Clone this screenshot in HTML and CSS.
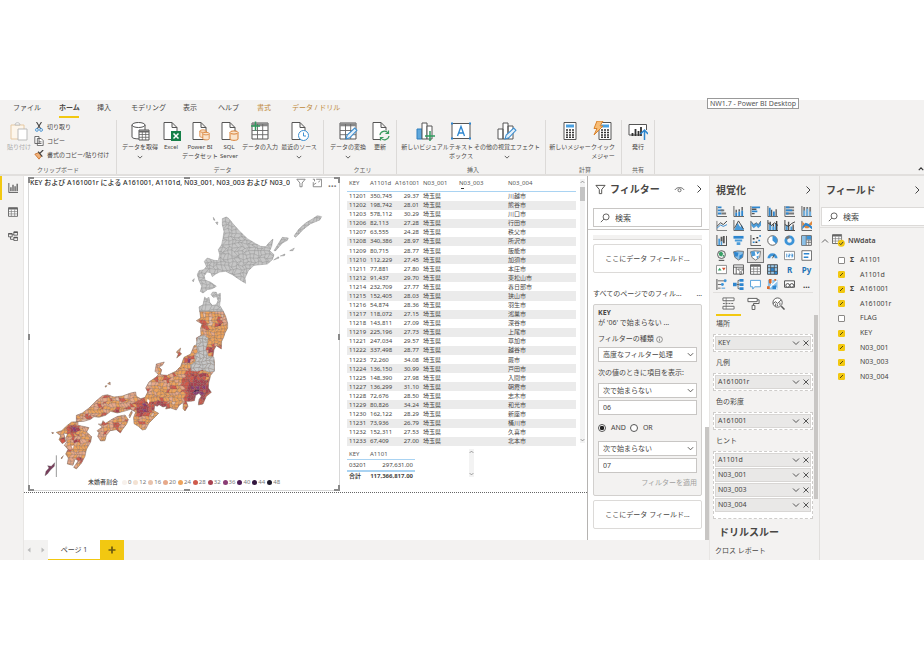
FILE: index.html
```html
<!DOCTYPE html>
<html lang="ja">
<head>
<meta charset="utf-8">
<title>NW1.7 - Power BI Desktop</title>
<link rel="stylesheet" href="styles.css">
</head>
<body>
<svg class="defs" aria-hidden="true">
  <defs>
    <symbol id="chev-down" viewBox="0 0 8 8"><path d="M1 2.5 4 5.5 7 2.5" fill="none" stroke="currentColor"/></symbol>
    <symbol id="chev-right" viewBox="0 0 8 8"><path d="M2.5 .5 6 4 2.5 7.5" fill="none" stroke="currentColor"/></symbol>
    <symbol id="cross" viewBox="0 0 8 8"><path d="M1.5 1.5 6.5 6.5M6.5 1.5 1.5 6.5" fill="none" stroke="currentColor"/></symbol>
    <symbol id="lens" viewBox="0 0 12 12"><circle cx="7.3" cy="4.7" r="3.6" fill="none" stroke="currentColor"/><path d="M4.6 7.4 1 11" stroke="currentColor"/></symbol>
    <symbol id="funnel" viewBox="0 0 12 12"><path d="M1 1.5H11L7.3 6V10.5H4.7V6Z" fill="none" stroke="currentColor"/></symbol>
    <symbol id="page" viewBox="0 0 20 20"><path d="M3 1.5H11L16 6.5V18.5H3ZM11 1.5V6.5H16" fill="#fff" stroke="#555"/></symbol>
    <symbol id="cyl" viewBox="0 0 10 11"><path d="M1 2.5V9C1 10.8 9 10.8 9 9V2.5" fill="#f9e4cd" stroke="#d98035"/><ellipse cx="5" cy="2.5" rx="4" ry="1.6" fill="#f9e4cd" stroke="#d98035"/></symbol>
    <symbol id="gridicon" viewBox="0 0 20 20"><path d="M2 2H18V18H2Z" fill="#fff" stroke="#555"/><path d="M2 3.8H18" stroke="#888" stroke-width="3"/><path d="M7.5 3V18M12.7 3V18M2 9.5H18M2 13.7H18" stroke="#666" stroke-width=".9"/></symbol>
    <symbol id="pencil" viewBox="0 0 12 12"><path d="M1 11 2 7.5 9 1 11 3 4.4 10Z" fill="#e4f1fb" stroke="#3d8fd1"/></symbol>
    <symbol id="calc" viewBox="0 0 20 20"><path d="M4 1.5H16V18.5H4Z" fill="#fff" stroke="#555"/><path d="M6 3.5H14V6.5H6Z" fill="#4aa0e0"/><path d="M6 9H8M9 9H11M12 9H14M6 11.5H8M9 11.5H11M12 11.5H14M6 14H8M9 14H11M12 14H14M6 16.3H8M9 16.3H11M12 16.3H14" stroke="#333" stroke-width="1.5"/></symbol>
    <symbol id="bars3" viewBox="0 0 20 20"><path d="M2 8H7V18H2Z" fill="#5fa8dc" stroke="#2e7ebd"/><path d="M7 2H12V18H7Z" fill="#fff" stroke="#555"/><path d="M12 5H17V18H12Z" fill="#fff" stroke="#555"/></symbol>

    <symbol id="v-barh" viewBox="0 0 12 12"><path d="M1 0V11.5H12" fill="none" stroke="#555"/><path d="M2 1.5H6M2 4.8H8M2 8.2H6" stroke="#2e86cf" stroke-width="2"/><path d="M5 4.8H9M6 8.2H11" stroke="#777" stroke-width="2"/></symbol>
    <symbol id="v-colstack" viewBox="0 0 12 12"><path d="M1 0V11.5H12" fill="none" stroke="#555"/><path d="M3.5 7V11M6.8 6V11M10 5V11" stroke="#2e86cf" stroke-width="2"/><path d="M3.5 4V7M6.8 3.5V6M10 1V5" stroke="#555" stroke-width="1.5"/></symbol>
    <symbol id="v-barc" viewBox="0 0 12 12"><path d="M1 0V11.5H12" fill="none" stroke="#555"/><path d="M2 1.5H11M2 5.8H8" stroke="#2e86cf" stroke-width="2"/><path d="M2 3.6H7M2 8.3H5" stroke="#555" stroke-width="1.5"/></symbol>
    <symbol id="v-colc" viewBox="0 0 12 12"><path d="M1 0V11.5H12" fill="none" stroke="#555"/><path d="M3 2V11M7.5 6V11" stroke="#2e86cf" stroke-width="2"/><path d="M5 4V11M10 3.5V11" stroke="#555" stroke-width="1.4"/></symbol>
    <symbol id="v-bar100" viewBox="0 0 12 12"><path d="M1 0V11.5H12" fill="none" stroke="#555"/><path d="M2 1.5H11M2 4.8H11M2 8.2H11" stroke="#777" stroke-width="2"/><path d="M2 1.5H6M2 4.8H9M2 8.2H5" stroke="#2e86cf" stroke-width="2"/></symbol>
    <symbol id="v-col100" viewBox="0 0 12 12"><path d="M1 0V11.5H12" fill="none" stroke="#555"/><path d="M3.5 1V11M6.8 1V11M10 1V11" stroke="#777" stroke-width="2"/><path d="M3.5 5V11M6.8 3V11M10 6V11" stroke="#6fb1e2" stroke-width="2"/></symbol>
    <symbol id="v-line" viewBox="0 0 12 12"><path d="M1 1V11.5H12" fill="none" stroke="#777"/><path d="M1 7 5 3 8 5 12 1" fill="none" stroke="#333"/><path d="M1 9 5 5.5 8 7 12 5" fill="none" stroke="#2e86cf"/></symbol>
    <symbol id="v-area" viewBox="0 0 12 12"><path d="M1 0V11.5H12" fill="none" stroke="#555"/><path d="M1.5 11 5 3 8 8 9.5 5 12 11Z" fill="#4a9bd9"/><path d="M1.5 9 6 1 11.5 10" fill="none" stroke="#444"/></symbol>
    <symbol id="v-ribbonarea" viewBox="0 0 12 12"><path d="M1 1V11.5H12" fill="none" stroke="#555"/><path d="M1.500 2 4 5 7 3 9 5 12 1V6L9 9 7 6.500 4 9 1.500 6Z" fill="#4a9bd9"/><path d="M1.5 2 4 5 7 3 9 5 12 1" fill="none" stroke="#444" stroke-width=".7"/></symbol>
    <symbol id="v-combo" viewBox="0 0 12 12"><path d="M1 0V11.5H12" fill="none" stroke="#333"/><path d="M3.5 5V11M7 7V11M10 4V11" stroke="#4a9bd9" stroke-width="2.4"/><path d="M3.500 2V5M7 4.500V7M10.500 1V11" stroke="#444" stroke-width="1.5"/><path d="M1 3 5 6 8 3 12 6" fill="none" stroke="#333"/></symbol>
    <symbol id="v-combo2" viewBox="0 0 12 12"><path d="M1 0V11.5H12" fill="none" stroke="#333"/><path d="M3 6V11M8 7V11" stroke="#4a9bd9" stroke-width="2"/><path d="M5 2V11M10 5V11" stroke="#555" stroke-width="1.500"/><path d="M1 5 5 7 8 4 12 2" fill="none" stroke="#333"/></symbol>
    <symbol id="v-flow" viewBox="0 0 12 12"><path d="M1 1V11.5H12" fill="none" stroke="#555"/><path d="M1.500 2 5 5 8 5 12 1V5L8 9 5 9 1.500 6Z" fill="#e0873b"/><path d="M1.5 7 5 3 8 4 12 7V10L8 7 5 6 1.5 10Z" fill="#2e86cf"/></symbol>
    <symbol id="v-water" viewBox="0 0 12 12"><path d="M1 0V11.5H12M11.500 1V11" fill="none" stroke="#444"/><path d="M3.500 4V11" stroke="#4a9bd9" stroke-width="2"/><path d="M6 2V7M8.5 1V9" stroke="#555" stroke-width="2"/><path d="M6 7V11" stroke="#4a9bd9" stroke-width="1.5"/></symbol>
    <symbol id="v-funnel" viewBox="0 0 12 12"><path d="M.5 1H11.5V4H.5Z" fill="#2e86cf"/><path d="M2 5H10V7H2ZM4 8H8V11H4Z" fill="#4a9bd9"/></symbol>
    <symbol id="v-scatter" viewBox="0 0 12 12"><path d="M1 0V11.5H12" fill="none" stroke="#555"/><path d="M3 4H5M7 3H9M6 8H8" stroke="#333" stroke-width="1.7"/><path d="M9 6H11M3 8H5M10 1H12" stroke="#2e86cf" stroke-width="1.7"/></symbol>
    <symbol id="v-pie" viewBox="0 0 12 12"><circle cx="6" cy="6" r="5.2" fill="#fff" stroke="#555"/><path d="M6 6V.8A5.200 5.200 0 0 1 10 9.500Z" fill="#3d94d8"/></symbol>
    <symbol id="v-donut" viewBox="0 0 12 12"><circle cx="6" cy="6" r="4" fill="none" stroke="#3d94d8" stroke-width="3"/><path d="M6 2A4 4 0 0 0 2.500 4" fill="none" stroke="#777" stroke-width="3"/></symbol>
    <symbol id="v-tree" viewBox="0 0 12 12"><path d="M.7.7H11.3V11.3H.7Z" fill="#fff" stroke="#555"/><path d="M1 1H5.500V11H1Z" fill="#8cc1e8"/><path d="M6 1H11V5H6Z" fill="#3d94d8"/><path d="M5.700 1V11M6 5.500H11M8.500 5.500V11M6 8H11" stroke="#555" stroke-width=".8"/></symbol>
    <symbol id="v-globe" viewBox="0 0 12 12"><circle cx="6" cy="5" r="4.300" fill="#eee" stroke="#555"/><path d="M3 3 6 1.500 8 4 6 7 3.500 6ZM7 6 9.500 5 8 8Z" fill="#39a066"/><path d="M3 11.300H9" stroke="#333"/></symbol>
    <symbol id="v-fill" viewBox="0 0 12 12"><path d="M.6 2 5 1 11.500 1.500 10.500 8 6 11 2 8Z" fill="#8cc1e8" stroke="#555" stroke-width=".8"/><path d="M1 2 6 3 5 7 2 7ZM7 6 11 4 10 8 7 10Z" fill="#2e86cf"/></symbol>
    <symbol id="v-shape" viewBox="0 0 12 12"><path d="M.6 2 5 1 11.500 1.500 10.500 8 6 11 2 8Z" fill="#fff" stroke="#555" stroke-width=".8"/><path d="M1 2 5 1 6 6 2 7ZM7 2 11 2 8 5ZM7 7 10 6 8 10Z" fill="#4a9bd9"/></symbol>
    <symbol id="v-gauge" viewBox="0 0 12 12"><path d="M2 9A4 4 0 0 1 10 9" fill="none" stroke="#3d94d8" stroke-width="3"/><path d="M6 9 8 5" stroke="#444"/></symbol>
    <symbol id="v-card" viewBox="0 0 12 12"><path d="M.5 1.500H11.500V10.500H.5Z" fill="#fff" stroke="#888"/><path d="M3 4V8M5 4.500H6.500V6H5V7.500H6.500M8 4.500H9.500V7.500H8M8 6H9.500" fill="none" stroke="#2e86cf" stroke-width=".9"/></symbol>
    <symbol id="v-multi" viewBox="0 0 12 12"><path d="M1 .8H11.500V11.200H1Z" fill="#fff" stroke="#666"/><path d="M3 4H9M3 8H8" stroke="#2e86cf" stroke-width="1.7"/></symbol>
    <symbol id="v-kpi" viewBox="0 0 12 12"><path d="M.5 1.500H11.500V10.500H.5Z" fill="#fff" stroke="#888"/><path d="M2 7 4 4 6 7Z" fill="#39a066"/><path d="M6.500 4H10.500L8.500 7Z" fill="#d35230"/></symbol>
    <symbol id="v-slicer" viewBox="0 0 12 12"><path d="M.6 1H11.400V11H.6ZM.6 3.500H11M3.500 3.500V11" fill="#fff" stroke="#555"/><path d="M5 5.500H11.500L9 8V11.500H7.500V8Z" fill="#fff" stroke="#444" stroke-width=".8"/></symbol>
    <symbol id="v-table" viewBox="0 0 12 12"><path d="M.6.8H11.400V11.200H.6Z" fill="#fff" stroke="#555"/><path d="M1 2H11" stroke="#666" stroke-width="2"/><path d="M4 3V11M8 3V11M1 5.500H11M1 8.300H11" stroke="#777" stroke-width=".8"/></symbol>
    <symbol id="v-matrix" viewBox="0 0 12 12"><path d="M.6.8H11.400V11.200H.6Z" fill="#9ccbec" stroke="#444"/><path d="M4 4H8V8H4ZM8 8H11V11H8Z" fill="#2e86cf"/><path d="M4 1V11M8 1V11M1 4H11M1 8H11" stroke="#444" stroke-width=".8"/></symbol>
    <symbol id="v-infl" viewBox="0 0 12 12"><path d="M1 0V12" stroke="#444"/><path d="M2 2H9M2 6H6M2 10H5" stroke="#666"/><circle cx="10" cy="2" r="1.600" fill="#3d94d8"/><circle cx="7" cy="6" r="1.600" fill="#3d94d8"/><path d="M6 10H10" stroke="#3d94d8"/></symbol>
    <symbol id="v-tree2" viewBox="0 0 12 12"><path d="M0 4H4V8H0ZM7 0H11.500V3H7ZM7 4.500H11.500V7.500H7ZM7 9H11.500V12H7Z" fill="#2e86cf"/><path d="M4 6H7M5.500 1.500V10.500M5.500 1.500H7M5.500 10.500H7" fill="none" stroke="#555" stroke-width=".9"/></symbol>
    <symbol id="v-qa" viewBox="0 0 12 12"><path d="M.6 1.500H11.400V8.500H5L3 11V8.500H.6Z" fill="#fff" stroke="#4a9bd9"/></symbol>
    <symbol id="v-arc" viewBox="0 0 12 12"><path d="M1 1H11.500V11.500H1Z" fill="#8cc1e8"/><path d="M1 11 11 2M6 6 11 11M5 1V6" stroke="#fff" stroke-width="1.500"/><path d="M2 0H5V4L3.500 5.500 2 4ZM0 8H3V11H0ZM8 0H10V2H8Z" fill="#d96a2b"/><path d="M6 7H10V11H6Z" fill="#2e86cf"/></symbol>
    <symbol id="v-pag" viewBox="0 0 12 12"><path d="M.6 2H11.400V9H.6Z" fill="#fff" stroke="#444"/><circle cx="4" cy="7" r="2" fill="#fff" stroke="#444"/><circle cx="8.500" cy="7" r="2" fill="#fff" stroke="#444"/></symbol>
  </defs>
</svg>

<div class="app">
  <header class="ribbon">
    <div class="window-tip">NW1.7 - Power BI Desktop</div>
    <nav class="tabs">
      <a href="#file" class="t1">ファイル</a><a href="#home" class="t2 on">ホーム</a><a href="#insert" class="t3">挿入</a><a href="#model" class="t4">モデリング</a><a href="#view" class="t5">表示</a><a href="#help" class="t6">ヘルプ</a><a href="#format" class="t7 ctx">書式</a><a href="#drill" class="t8 ctx">データ / ドリル</a>
    </nav>
    <div class="groups">
      <section class="group clip">
        <div class="tools">
          <button class="tool off"><svg viewBox="0 0 20 20"><path d="M2 4H15V18H2Z" fill="#fdf6ec" stroke="#e6c9a2"/><path d="M6 4C6 1 11 1 11 4Z" fill="#fff" stroke="#bbb"/><path d="M9 8H18V19H9Z" fill="#fff" stroke="#bbb"/></svg>貼り付け</button>
          <div class="stack">
            <button><svg viewBox="0 0 12 12"><path d="M3 0 8 8M9 0 4 8" stroke="#444" stroke-width="1.300"/><circle cx="3.500" cy="9.500" r="1.700" fill="none" stroke="#2e86cf"/><circle cx="8.500" cy="9.500" r="1.700" fill="none" stroke="#2e86cf"/></svg>切り取り</button>
            <button><svg viewBox="0 0 12 12"><path d="M1 .6H6V9H1ZM4 3H8.500L11 5.500V11.500H4ZM6 7H9M6 9H9" fill="#fff" stroke="#555"/></svg>コピー</button>
            <button><svg viewBox="0 0 12 12"><path d="M1 5 6 3 9 7 6 11Z" fill="#f2b27a" stroke="#c8702c"/><path d="M7 4 11 0M5 2 10 8" stroke="#444" stroke-width="1.500"/></svg>書式のコピー/貼り付け</button>
          </div>
        </div>
        <h2>クリップボード</h2>
      </section>
      <section class="group data">
        <div class="tools">
          <button class="tool"><svg viewBox="0 0 20 20"><path d="M2 4V16C2 18.500 15 18.500 15 16V4" fill="#fff" stroke="#555"/><ellipse cx="8.500" cy="4" rx="6.500" ry="2.500" fill="#fff" stroke="#555"/><path d="M9 9H19V19H9Z" fill="#fff" stroke="#555"/><path d="M9 10.500H19" stroke="#666" stroke-width="2"/><path d="M12.300 10V19M15.700 10V19M9 13.500H19M9 16.300H19" stroke="#666" stroke-width=".8"/></svg>データを取得<svg class="drop"><use href="#chev-down"/></svg></button>
          <button class="tool"><svg viewBox="0 0 20 20"><use href="#page"/><path d="M10 10H20V20H10Z" fill="#158048"/><path d="M12.500 12.500 17.500 17.500M17.500 12.500 12.500 17.500" stroke="#fff" stroke-width="1.500"/></svg>Excel</button>
          <button class="tool"><svg viewBox="0 0 20 20"><use href="#page"/><use href="#cyl" x="9" y="8" width="8" height="9"/><use href="#cyl" x="12" y="10" width="8" height="10"/></svg>Power BI<br>データセット</button>
          <button class="tool"><svg viewBox="0 0 20 20"><use href="#page"/><use href="#cyl" x="10" y="9" width="10" height="11"/></svg>SQL<br>Server</button>
          <button class="tool"><svg viewBox="0 0 20 20"><use href="#gridicon"/><path d="M1 5H10M5.500 .5V9.500" stroke="#2f9a5e" stroke-width="1.500"/></svg>データの入力</button>
          <button class="tool"><svg viewBox="0 0 20 20"><use href="#page"/><circle cx="14.500" cy="14.500" r="5" fill="#fff" stroke="#3d8fd1"/><path d="M14.500 11.500V15H17" fill="none" stroke="#3d8fd1"/></svg>最近のソース<svg class="drop"><use href="#chev-down"/></svg></button>
        </div>
        <h2>データ</h2>
      </section>
      <section class="group query">
        <div class="tools">
          <button class="tool"><svg viewBox="0 0 20 20"><use href="#gridicon"/><use href="#pencil" x="7" y="6" width="13" height="13"/></svg>データの変換<svg class="drop"><use href="#chev-down"/></svg></button>
          <button class="tool"><svg viewBox="0 0 20 20"><use href="#page"/><circle cx="14.500" cy="14.500" r="5.500" fill="#f3f2f1"/><path d="M10 14A4.500 4.500 0 0 1 18 12M18.500 9.500V12.500H15.500M19 15A4.500 4.500 0 0 1 11 17M10.500 19.500V16.500H13.500" fill="none" stroke="#3a9a5f" stroke-width="1.200"/></svg>更新</button>
        </div>
        <h2>クエリ</h2>
      </section>
      <section class="group insert">
        <div class="tools">
          <button class="tool"><svg viewBox="0 0 20 20"><use href="#bars3"/><path d="M10 15H20M15 10V20" stroke="#2f9a5e" stroke-width="1.500"/></svg>新しいビジュアル</button>
          <button class="tool"><svg viewBox="0 0 20 20"><path d="M1 2.500H19V17.500H1Z" fill="#fff" stroke="#555"/><path d="M6.500 15 10 5.500 13.500 15M7.700 12H12.300" fill="none" stroke="#2e86cf" stroke-width="1.300"/><path d="M0 1.500H2V3.500H0ZM18 1.500H20V3.500H18ZM0 16.500H2V18.500H0ZM18 16.500H20V18.500H18Z" fill="#2e86cf"/></svg>テキスト<br>ボックス</button>
          <button class="tool"><svg viewBox="0 0 20 20"><path d="M1 8H6V18H1ZM6 2H11V18H6ZM11 5H16V18H11Z" fill="#fff" stroke="#555"/><use href="#pencil" x="7" y="6" width="13" height="13"/></svg>その他の視覚エフェクト<svg class="drop"><use href="#chev-down"/></svg></button>
        </div>
        <h2>挿入</h2>
      </section>
      <section class="group calcs">
        <div class="tools">
          <button class="tool"><svg viewBox="0 0 20 20"><use href="#calc"/></svg>新しいメジャー</button>
          <button class="tool"><svg viewBox="0 0 20 20"><use href="#calc" x="2"/><path d="M4 0H10L7 5H10L1 14 4 7.500H1Z" fill="#f7bd76" stroke="#d9822b"/></svg>クイック<br>メジャー</button>
        </div>
        <h2>計算</h2>
      </section>
      <section class="group share">
        <div class="tools">
          <button class="tool"><svg viewBox="0 0 20 20"><path d="M13 14H1V3.500H18.500V9" fill="#fff" stroke="#555"/><path d="M4.500 15V12M7.500 15V8M10.500 15V10M13 15V6" stroke="#333" stroke-width="1.800"/><path d="M16.500 19V9.500M12.500 13 16.500 9 20 13" fill="none" stroke="#2e86cf" stroke-width="1.500"/></svg>発行</button>
        </div>
        <h2>共有</h2>
      </section>
      <svg class="collapse" viewBox="0 0 8 8"><path d="M1 5.500 4 2.500 7 5.500" fill="none" stroke="#333" stroke-width="1.500"/></svg>
    </div>
  </header>

  <nav class="rail">
    <button class="on" aria-label="レポート"><svg viewBox="0 0 12 12"><path d="M1 0V11.500H12" fill="none" stroke="#444"/><path d="M3.500 5V10M6 2V10M8.500 4V10M11 1V10" stroke="#555" stroke-width="1.500"/></svg></button>
    <button aria-label="データ"><svg viewBox="0 0 12 12"><use href="#v-table"/></svg></button>
    <button aria-label="モデル"><svg viewBox="0 0 12 12"><path d="M.6 3H5V7H.6ZM7 1H11.500V5H7ZM7 7.500H11.500V11.500H7ZM3 7V10H7M5 4.500H7" fill="none" stroke="#555"/><path d="M.6 3.500H5M7 1.500H11.500M7 8H11.500" stroke="#555" stroke-width="1.500"/></svg></button>
  </nav>

  <main class="canvas">
    <div class="report">
      <section class="visual">
        <i class="h tl"></i><i class="h tc"></i><i class="h tr"></i><i class="h ml"></i><i class="h mr"></i><i class="h bl"></i><i class="h bc"></i><i class="h br"></i>
        <header>
          <h3>KEY および A161001r による A161001, A1101d, N03_001, N03_003 および N03_004</h3>
          <svg viewBox="0 0 12 12"><use href="#funnel"/></svg>
          <svg viewBox="0 0 12 12"><path d="M5 1.500H11.500V10.500H1.500V5M7.500 5 10 3M1 1.500H3V4M2 8 5 6" fill="none" stroke="currentColor"/></svg>
          <b>…</b>
        </header>
        <svg id="map" class="map" viewBox="90 100 930 810" role="img" aria-label="未婚者割合の地図"></svg>
        <ul class="legend" id="legend"><li class="name">未婚者割合</li></ul>
      </section>
      <section class="tables">
        <div class="scroller">
          <table class="cities">
            <thead><tr><th>KEY</th><th>A1101d</th><th class="num">A161001</th><th>N03_001</th><th class="sorted">N03_003</th><th>N03_004</th></tr></thead>
            <tbody id="cities"></tbody>
          </table>
          <div class="sbar"><svg viewBox="0 0 8 8"><path d="M1 5.500 4 2.500 7 5.500" fill="none" stroke="#666"/></svg><span></span><svg><use href="#chev-down"/></svg></div>
        </div>
        <div class="scroller small">
          <table class="total">
            <thead><tr><th>KEY</th><th>A1101</th></tr></thead>
            <tbody><tr><td>03201</td><td class="num">297,631.00</td></tr></tbody>
            <tfoot><tr><td>合計</td><td class="num">117,366,817.00</td></tr></tfoot>
          </table>
          <div class="sbar"><svg viewBox="0 0 8 8"><path d="M1 5.500 4 2.500 7 5.500" fill="none" stroke="#666"/></svg><svg><use href="#chev-down"/></svg></div>
        </div>
      </section>
    </div>
  </main>

  <aside class="filters">
    <header><svg class="ic"><use href="#funnel"/></svg><h2>フィルター</h2><svg class="eye" viewBox="0 0 12 12"><path d="M1 6.500C3 3 9 3 11 6.500" fill="none" stroke="#666"/><circle cx="6" cy="6.800" r="1.700" fill="none" stroke="#666"/></svg><svg class="go"><use href="#chev-right"/></svg></header>
    <label class="search"><svg><use href="#lens"/></svg><input type="text" placeholder="検索" aria-label="フィルターの検索"></label>
    <div class="pane">
      <div class="stub"></div>
      <div class="dropzone">ここにデータ フィールド...</div>
      <h3>すべてのページでのフィル...<span>…</span></h3>
      <form class="card">
        <b>KEY</b>
        <p>が '06' で始まらない ...</p>
        <label class="cap" for="kind">フィルターの種類<svg viewBox="0 0 12 12"><circle cx="6" cy="6" r="5" fill="none" stroke="#555"/><path d="M6 5V9M6 2.800V4" stroke="#555"/></svg></label>
        <div class="sel"><select id="kind"><option>高度なフィルター処理</option></select><svg><use href="#chev-down"/></svg></div>
        <label class="cap" for="op1">次の値のときに項目を表示:</label>
        <div class="sel"><select id="op1"><option>次で始まらない</option></select><svg><use href="#chev-down"/></svg></div>
        <input type="text" value="06" aria-label="値 1">
        <div class="radios"><label><input type="radio" name="logic" checked>AND</label><label><input type="radio" name="logic">OR</label></div>
        <div class="sel"><select aria-label="条件 2"><option>次で始まらない</option></select><svg><use href="#chev-down"/></svg></div>
        <input type="text" value="07" aria-label="値 2">
        <button type="button" class="apply">フィルターを適用</button>
      </form>
      <div class="dropzone">ここにデータ フィールド...</div>
    </div>
    <i class="thumb"></i>
  </aside>

  <aside class="viz">
    <header><h2>視覚化</h2><svg class="go"><use href="#chev-right"/></svg></header>
    <div class="gallery" id="gallery"></div>
    <div class="modes">
      <button class="on" aria-label="フィールド"><svg viewBox="0 0 14 14"><path d="M1 1H13V4H1ZM1 10H13V13H1Z" fill="#fff" stroke="#666"/><path d="M1 7H13" stroke="#666" stroke-dasharray="2 1"/><path d="M4.500 1V13" stroke="#666" stroke-width=".7"/></svg></button>
      <button aria-label="書式"><svg viewBox="0 0 14 14"><path d="M1 1.500H11V5H1ZM11 3H13V7H7V9M5.500 9H8.500V13.500H5.500Z" fill="#fff" stroke="#555"/></svg></button>
      <button aria-label="分析"><svg viewBox="0 0 14 14"><circle cx="6" cy="6" r="5" fill="#fff" stroke="#555"/><path d="M10 10 13.500 13.500" stroke="#555" stroke-width="1.600"/><path d="M1 7 4 5 6 7 10 3M4 10V7M6 10V8M8.500 9V6" fill="none" stroke="#555"/></svg></button>
    </div>
    <div class="wells">
      <h3>場所</h3>
      <ul><li>KEY</li></ul>
      <h3>凡例</h3>
      <ul><li>A161001r</li></ul>
      <h3>色の彩度</h3>
      <ul><li>A161001</li></ul>
      <h3>ヒント</h3>
      <ul class="many"><li>A1101d</li><li>N03_001</li><li>N03_003</li><li>N03_004</li></ul>
      <h2>ドリルスルー</h2>
      <p>クロス レポート</p>
    </div>
    <i class="thumb"></i>
  </aside>

  <aside class="fields">
    <header><h2>フィールド</h2><svg class="go"><use href="#chev-right"/></svg></header>
    <label class="search"><svg><use href="#lens"/></svg><input type="text" placeholder="検索" aria-label="フィールドの検索"></label>
    <div class="tname"><svg viewBox="0 0 8 8"><path d="M1 5.500 4 2.500 7 5.500" fill="none" stroke="#666"/></svg><svg class="tb" viewBox="0 0 14 14"><use href="#v-table" width="11" height="11"/><circle cx="10" cy="10" r="3.800" fill="#f2c811"/><path d="M8 10 9.500 11.500 12 8.500" fill="none" stroke="#333"/></svg>NWdata</div>
    <ul>
      <li><label><input type="checkbox"><i>Σ</i>A1101</label></li>
      <li><label><input type="checkbox" checked><i></i>A1101d</label></li>
      <li><label><input type="checkbox" checked><i>Σ</i>A161001</label></li>
      <li><label><input type="checkbox" checked><i></i>A161001r</label></li>
      <li><label><input type="checkbox"><i></i>FLAG</label></li>
      <li><label><input type="checkbox" checked><i></i>KEY</label></li>
      <li><label><input type="checkbox" checked><i></i>N03_001</label></li>
      <li><label><input type="checkbox" checked><i></i>N03_003</label></li>
      <li><label><input type="checkbox" checked><i></i>N03_004</label></li>
    </ul>
  </aside>

  <footer class="pages">
    <span class="arrows"><svg viewBox="0 0 8 8"><path d="M5.500 1.500 2.500 4 5.500 6.500Z" fill="#bbb"/></svg><svg viewBox="0 0 8 8"><path d="M2.500 1.500 5.500 4 2.500 6.500Z" fill="#bbb"/></svg></span>
    <button class="page">ページ 1</button>
    <button class="add" aria-label="ページの追加"><svg viewBox="0 0 8 8"><path d="M4 .5V7.500M.5 4H7.500" stroke="#6b5a12" stroke-width="1.700"/></svg></button>
  </footer>
</div>
<script src="script.js"></script>
</body>
</html>
```
FILE: styles.css
```css
* { box-sizing: border-box; margin: 0; padding: 0; }
:root { --pane: #f3f2f1; --line: #dcdad8; --ink: #484644; --gold: #f2c811; }
body { background: #fff; color: var(--ink); font: 7px/10px "Noto Sans", "Noto Sans CJK JP", sans-serif; }
button, input, select { font: inherit; color: inherit; border: 0; background: none; border-radius: 0; }
button { cursor: pointer; }
a { color: inherit; text-decoration: none; }
ul { list-style: none; }
svg { display: block; flex: none; }
.defs { position: absolute; width: 0; height: 0; }

.app {
  margin-top: 100px;
  display: grid;
  grid-template-columns: 24px minmax(0, 1fr) 122px 110px 105px;
  grid-template-rows: auto 364px 20px;
}

/* ribbon */
.ribbon { grid-column: 1 / -1; position: relative; background: var(--pane); border-bottom: 2px solid #e1dfdd; height: 76px; }
.window-tip { position: absolute; right: 125px; top: -2px; border: 1px solid #999; background: #fff; line-height: 9px; padding: 0 2px; color: #555; white-space: nowrap; }
.tabs { display: flex; gap: 18px; padding: 3px 0 0 13px; height: 18px; white-space: nowrap; }
.tabs a { height: 15px; border-bottom: 2px solid transparent; }
.tabs .t1 { width: 28px; }
.tabs .t2 { width: 20px; }
.tabs .t3 { width: 16px; }
.tabs .t4 { width: 34px; }
.tabs .t5 { width: 17px; }
.tabs .t6 { width: 21px; }
.tabs .t7 { width: 17px; }
.tabs .on { border-color: var(--gold); font-weight: 700; }
.tabs .ctx { color: #c08a3a; }
.groups { display: flex; font-size: 6px; padding-top: 2px; height: 56px; position: relative; }
.group { border-right: 1px solid var(--line); display: flex; flex-direction: column; justify-content: space-between; height: 54px; }
.group h2 { font-size: 6px; line-height: 7px; font-weight: 400; text-align: center; color: #605e5c; }
.tools { display: grid; }
.tool { display: flex; flex-direction: column; align-items: center; white-space: nowrap; line-height: 9px; padding-top: 1px; }
.tool > svg { width: 20px; height: 20px; margin-bottom: 2px; }
.tool > .drop { width: 6px; height: 6px; margin-top: 2px; color: #333; }
.off { color: #aaa; }
.clip { width: 117px; }
.clip .tools { grid-template-columns: 30px 1fr; padding-left: 4px; }
.stack { display: grid; grid-auto-rows: 14px; }
.stack button { display: flex; align-items: center; gap: 3px; white-space: nowrap; }
.stack svg { width: 10px; height: 10px; }
.data { width: 207px; padding-left: 5px; }
.data .tools { grid-template-columns: 36px 26px 32px 26px 36px 42px; }
.query { width: 73px; padding-left: 5px; }
.query .tools { grid-template-columns: 38px 26px; }
.insert { width: 149px; padding-left: 4px; }
.insert .tools { grid-template-columns: 48px 24px 68px; }
.calcs { width: 76px; padding-left: 3px; }
.calcs .tools { grid-template-columns: 42px 24px; }
.share { width: 33px; }
.collapse { width: 6px; height: 6px; margin: 46px 0 0 auto; }

/* left rail */
.rail { grid-row: 2 / 4; background: var(--pane); border-right: 1px solid #e8e6e4; }
.rail button { display: grid; place-items: center; width: 24px; height: 24px; border-left: 2px solid transparent; }
.rail .on { border-color: var(--gold); }
.rail svg { width: 10px; height: 10px; }

/* report canvas */
.canvas { background: #fff; }
.report { display: flex; height: 317px; border-bottom: 1px dotted #666; }
.visual { position: relative; flex: 0 0 312px; min-width: 0; margin: 1px 0 1px 4px; border: 1px solid #d8d8d8; display: flex; flex-direction: column; }
.visual header { display: flex; align-items: center; gap: 6px; color: #777; height: 10px; padding: 0 1px; }
.visual h3 { flex: 1; min-width: 0; font-weight: 500; font-size: 7px; color: #333; white-space: nowrap; overflow: hidden; }
.visual header svg { width: 10px; height: 10px; }
.visual header b { width: 10px; font-size: 10px; line-height: 6px; }
.map { width: 100%; height: 270px; margin-top: 20px; }
.h { position: absolute; border: 0 solid #8a8a8a; width: 6px; height: 6px; }
.tl { left: -1px; top: -1px; border-width: 2px 0 0 2px; }
.tr { right: -1px; top: -1px; border-width: 2px 2px 0 0; }
.bl { left: -1px; bottom: -1px; border-width: 0 0 2px 2px; }
.br { right: -1px; bottom: -1px; border-width: 0 2px 2px 0; }
.tc, .bc { left: 50%; border-width: 2px 0 0; height: 2px; }
.tc { top: -1px; }
.bc { bottom: -1px; }
.ml, .mr { top: 50%; border-width: 0 0 0 2px; }
.ml { left: -1px; }
.mr { right: -5px; }
.legend { display: flex; justify-content: center; gap: 2px; font-size: 6px; line-height: 8px; color: #777; }
.legend li { display: flex; align-items: center; gap: 1px; }
.legend .name { color: #222; margin-right: 2px; }
.legend i { width: 5px; height: 5px; border-radius: 50%; }

.tables { flex: 1; padding: 0 2px 0 7px; font-size: 6px; line-height: 8px; }
.tables table { border-collapse: collapse; table-layout: fixed; }
.tables th { font-weight: 400; text-align: left; color: #555; }
.tables th, .tables td { padding: 0 2px; white-space: nowrap; }
.tables .num { text-align: right; }
.scroller { display: flex; justify-content: space-between; }
.cities { width: 229px; height: 270px; }
.cities thead tr { height: 15px; border-bottom: 1px solid #a9d3f2; }
.cities tbody tr:nth-child(even) { background: #ebebeb; }
.cities th:nth-child(1) { width: 21px; }
.cities th:nth-child(2) { width: 25px; }
.cities th:nth-child(3) { width: 28px; }
.cities th:nth-child(4) { width: 36px; }
.cities th:nth-child(5) { width: 49px; }
.cities .sorted { background: linear-gradient(#333, #333) 4px 12px / 3px 1px no-repeat; }
.sbar { width: 5px; background: #f3f3f3; margin: 3px 0; display: flex; flex-direction: column; justify-content: space-between; color: #666; }
.sbar svg { width: 5px; height: 6px; }
.sbar span { height: 14px; background: #c4c4c4; margin: 2px 0 auto; }
.small { width: 127px; padding-top: 3px; height: 34px; }
.total { width: 68px; }
.total th { height: 10px; }
.total th:first-child { width: 21px; }
.total thead tr { border-bottom: 1px solid #a9d3f2; }
.total tfoot tr { border-top: 2px solid #a9d3f2; font-weight: 700; }
.small .sbar { height: 28px; margin: 0; }

/* shared pane pieces */
aside { position: relative; }
aside > header { display: flex; align-items: center; height: 28px; }
aside h2 { font-size: 10px; line-height: 12px; font-weight: 700; }
.go { width: 8px; height: 8px; color: #444; }
.search { display: flex; align-items: center; gap: 5px; border: 1px solid #c8c6c4; background: #fff; height: 19px; padding-left: 6px; }
.search svg { width: 10px; height: 10px; }
.search input { flex: 1; min-width: 0; font-size: 8px; outline: 0; }
.search input::placeholder { color: #444; opacity: 1; }
.thumb { position: absolute; right: 0; width: 4px; background: #c8c6c4; }

/* filters */
.filters { border-left: 1px solid #b5b3b1; background: #fff; display: flex; flex-direction: column; overflow: hidden; }
.filters > header { padding: 0 6px 2px 7px; }
.filters .ic { width: 11px; height: 11px; margin-right: 4px; }
.filters .eye { width: 11px; height: 11px; margin: 0 10px 0 auto; }
.filters .search { margin: 4px 7px 2px 5px; }
.pane { border-top: 1px solid #c8c6c4; padding: 0 7px 0 5px; }
.stub { height: 5px; margin: 5px 0 4px; background: var(--pane); border-bottom: 1px solid var(--line); }
.dropzone { border: 1px solid var(--line); border-radius: 2px; text-align: center; line-height: 27px; height: 29px; white-space: nowrap; }
.pane h3 { font-size: 7px; font-weight: 400; margin: 16px 0 5px; display: flex; white-space: nowrap; justify-content: space-between; }
.card { background: var(--pane); border: 1px solid #d2d0ce; border-radius: 2px; padding: 3px 4px; margin-bottom: 4px; height: 192px; display: flex; flex-direction: column; white-space: nowrap; }
.cap { display: flex; align-items: center; gap: 2px; margin: 6px 0 3px; }
.cap svg { width: 7px; height: 7px; }
.sel { position: relative; }
.sel select { appearance: none; width: 100%; border: 1px solid #c8c6c4; background: #fff; height: 15px; padding-left: 4px; }
.sel svg { position: absolute; right: 3px; top: 4px; width: 7px; height: 7px; }
.sel ~ .cap { margin: 6px 0 5px; }
.card > input { width: 100%; height: 15px; border: 1px solid #c8c6c4; background: #fff; padding-left: 4px; margin-top: 2px; }
.radios { display: flex; gap: 4px; height: 26px; align-items: center; }
.radios label { display: flex; align-items: center; gap: 5px; }
.radios input { appearance: none; width: 8px; height: 8px; border: 1px solid #555; border-radius: 50%; background: #fff; }
.radios input:checked { background: radial-gradient(#222 45%, #fff 60%); }
.apply { align-self: flex-end; color: #a19f9d; margin-top: 5px; }
.filters .thumb { top: 251px; bottom: 0; }

/* visualizations */
.viz, .fields { grid-row: 2 / 4; background: var(--pane); }
.viz { padding-left: 3px; border-left: 1px solid #e8e6e4; }
.viz > header { padding-left: 3px; justify-content: space-between; padding-right: 7px; }
.gallery { display: grid; grid-template-columns: repeat(6, 17px); grid-template-rows: repeat(6, 1fr); height: 88px; }
.gallery button { display: grid; place-items: center; color: #2573b5; font-weight: 700; font-size: 8px; line-height: 8px; }
.gallery svg { width: 11px; height: 11px; }
.gallery .on { outline: 1px solid #777; outline-offset: -1px; background: #e1dfdd; }
.gallery .more { color: #333; }
.modes { display: flex; border-top: 1px solid #e1dfdd; margin-right: 6px; padding-left: 3px; height: 24px; }
.modes button { width: 25px; height: 23px; display: grid; place-items: center; border-bottom: 2px solid transparent; }
.modes .on { border-color: var(--gold); }
.modes svg { width: 13px; height: 13px; }
.wells h3 { font-size: 7px; line-height: 10px; font-weight: 400; padding: 3px 3px 5px; }
.wells ul { border: 1px dashed #cfcdcb; background: #fff; margin: 0 6px 3px 0; padding: 1px; display: grid; gap: 1px; }
.wells li { background: #e9e8e7; border: 1px solid #d8d6d4; height: 14px; line-height: 12px; padding-left: 2px; display: flex; align-items: center; gap: 2px; }
.wells li svg { width: 8px; height: 8px; color: #555; }
.wells li svg:first-of-type { margin-left: auto; }
.wells .many { padding-bottom: 6px; }
.wells h2 { padding: 4px 6px 8px; }
.wells p { padding-left: 2px; }
.viz .thumb { top: 139px; height: 184px; right: 1px; }

/* fields */
.fields { border-left: 1px solid #e1dfdd; }
.fields > header { padding: 0 3px 0 6px; justify-content: space-between; }
.fields .search { margin: 3px 0 1px 1px; border-right: 0; border-color: #dcdad8; }
.tname { border-top: 1px solid #e1dfdd; display: flex; align-items: center; height: 26px; font-weight: 600; padding-left: 1px; gap: 3px; }
.tname svg { width: 8px; height: 8px; }
.tname .tb { width: 13px; height: 13px; }
.fields ul { display: grid; grid-auto-rows: 1fr; height: 131px; padding-left: 18px; }
.fields li { display: flex; align-items: center; }
.fields label { display: flex; align-items: center; }
.fields label i { width: 15px; padding-left: 5px; font-style: normal; font-weight: 700; }
.fields li input { appearance: none; width: 7px; height: 7px; border: 1px solid #8a8886; border-radius: 1px; background: #fff; }
.fields li input:checked { border-color: var(--gold); background: var(--gold) linear-gradient(135deg, transparent 40%, #5c4c08 45%, #5c4c08 55%, transparent 60%) center / 3px 3px no-repeat; }

/* page strip */
.pages { grid-column: 2 / 4; grid-row: 3; background: var(--pane); display: flex; }
.arrows { display: flex; align-items: center; gap: 6px; width: 24px; padding-left: 1px; }
.arrows svg { width: 8px; height: 8px; }
.page { width: 52px; background: #fff; border-bottom: 1px solid var(--gold); }
.add { width: 24px; background: var(--gold); display: grid; place-items: center; }
.add svg { width: 8px; height: 8px; }
```
FILE: script.js
```js
const cities = `11201 350,745 29.37 川越市
11202 198,742 28.01 熊谷市
11203 578,112 30.29 川口市
11206 82,113 27.28 行田市
11207 63,555 24.28 秩父市
11208 340,386 28.97 所沢市
11209 80,715 28.77 飯能市
11210 112,229 27.45 加須市
11211 77,881 27.80 本庄市
11212 91,437 29.70 東松山市
11214 232,709 27.77 春日部市
11215 152,405 28.03 狭山市
11216 54,874 28.36 羽生市
11217 118,072 27.15 鴻巣市
11218 143,811 27.09 深谷市
11219 225,196 27.73 上尾市
11221 247,034 29.57 草加市
11222 337,498 28.77 越谷市
11223 72,260 34.08 蕨市
11224 136,150 30.99 戸田市
11225 148,390 27.98 入間市
11227 136,299 31.10 朝霞市
11228 72,676 28.50 志木市
11229 80,826 34.24 和光市
11230 162,122 28.29 新座市
11231 73,936 26.79 桶川市
11232 152,311 27.53 久喜市
11233 67,409 27.00 北本市`;
document.getElementById('cities').innerHTML = cities.split('\n').map(line => {
  const [key, pop, rate, name] = line.split(' ');
  return `<tr><td>${key}</td><td>${pop}</td><td class="num">${rate}</td><td>埼玉県</td><td></td><td>${name}</td></tr>`;
}).join('');

const palette = ['#f7f1ec', '#f3e2d3', '#e8c3ad', '#e7a98a', '#eda35c', '#cf5b4d', '#a84352', '#8a3d76', '#4f1f56', '#33173f', '#1e1a2b'];
const steps = [0, 12, 16, 20, 24, 28, 32, 36, 40, 44, 48];
document.getElementById('legend').innerHTML += steps.map((s, i) =>
  `<li><i style="background:${palette[i]}"></i>${s}</li>`).join('');

const kinds = ['barh', 'colstack', 'barc', 'colc', 'bar100', 'col100', 'line', 'area', 'ribbonarea', 'combo', 'combo2', 'flow',
  'water', 'funnel', 'scatter', 'pie', 'donut', 'tree', 'globe', 'fill', 'shape', 'gauge', 'card', 'multi',
  'kpi', 'slicer', 'table', 'matrix', 'R', 'Py', 'infl', 'tree2', 'qa', 'arc', 'pag', '…'];
document.getElementById('gallery').innerHTML = kinds.map(k =>
  k === 'R' || k === 'Py' ? `<button>${k}</button>` :
  k === '…' ? `<button class="more">${k}</button>` :
  `<button aria-label="${k}"${k === 'shape' ? ' class="on"' : ''}><svg><use href="#v-${k}"/></svg></button>`).join('');

document.querySelectorAll('.wells li').forEach(li => {
  li.innerHTML += '<svg><use href="#chev-down"/></svg><svg><use href="#cross"/></svg>';
});

/* Choropleth: coastlines clip a mesh of small irregular districts. */
const grey = [
  'M682 127 690 132 700 145 722 170 745 192 770 207 785 215 800 216 812 202 822 193 818 215 812 228 825 240 820 255 805 268 785 270 765 272 748 288 738 310 740 326 722 315 700 300 680 290 662 292 650 298 640 306 635 294 624 292 616 303 618 316 635 323 652 335 640 342 625 345 612 355 604 350 608 335 600 318 595 300 600 288 615 285 622 275 616 260 625 250 645 257 658 258 662 240 658 225 668 210 672 190 675 170 670 150 670 132Z',
  'M825 228 835 212 850 188 868 190 865 197 850 205 830 228ZM885 184 900 163 920 145 940 133 955 123 968 126 962 136 935 147 915 162 890 188ZM824 256 838 246 840 250ZM844 244 858 238 856 243ZM872 228 886 220 882 228ZM643 128 648 137 644 136ZM650 143 657 142 655 150ZM580 317 586 312 583 322Z',
  'M617 367 622 372 630 368 632 383 640 392 652 390 657 378 653 366 643 368 636 360 641 352 652 353 655 360 664 356 664 375 662 392 673 410 602 410 600 397 612 390Z',
  'M597 487 615 482 627 490 625 505 620 525 628 545 645 548 646 590 630 592 610 585 595 590 577 588 574 572 590 560 588 545 597 530 592 510Z'
];
const honshu = 'M602 408 673 410 680 425 686 445 686 460 678 475 674 488 668 500 667 523 652 513 645 525 642 545 646 560 646 588 635 602 629 625 628 640 637 653 622 665 612 688 598 691 600 675 607 664 600 656 590 662 586 678 575 680 562 680 567 695 558 709 552 702 553 684 542 690 532 706 515 700 500 703 503 694 492 697 480 690 475 695 467 692 465 708 479 716 465 730 450 745 440 764 430 766 418 755 405 747 404 728 410 712 395 704 375 710 355 715 335 710 320 722 300 728 285 726 275 734 255 740 232 741 232 722 250 715 270 700 290 680 310 663 325 660 345 667 370 664 395 655 410 652 412 665 425 672 438 668 446 652 440 640 450 622 470 608 478 600 468 590 472 568 496 562 490 572 480 577 488 585 484 600 505 602 530 590 545 575 555 548 575 538 585 513 595 510 592 490 606 482 605 460 609 448 592 438 605 430Z';
const isles = 'M545 520 532 532 538 538 533 550 548 538 542 532ZM326 627 333 622 334 630ZM318 634 324 633 320 638ZM390 722 398 708 400 714 392 730ZM298 748 308 748 312 738 320 746 340 733 356 725 378 721 388 735 383 748 370 765 364 775 352 765 334 768 322 782 318 798 305 799 296 785 300 774 294 768 310 757ZM205 752 218 742 237 741 237 752 258 756 270 759 263 772 278 786 275 802 262 825 258 845 247 866 232 883 224 878 238 858 228 853 222 872 205 868 208 850 200 838 207 824 196 812 204 800 200 790 206 778 194 775 200 800 190 807 180 795 185 783 172 773 188 768ZM158 773 164 774 161 778ZM186 850 193 843 188 853Z';
const okinawa = 'M138 903 141 890 150 880 146 873 157 875 167 864 166 875 155 885 145 898Z';

/* x, y, radius, peak level */
const hot = [[592, 645, 46, 7.400], [592, 618, 42, 6], [428, 697, 26, 7.200], [487, 683, 17, 6.800], [637, 522, 14, 7], [219, 760, 17, 6.800],
  [308, 715, 8, 6.500], [655, 445, 10, 5.500], [656, 425, 6, 5.500], [612, 448, 9, 5.500], [565, 551, 10, 6.500], [515, 632, 9, 5.800],
  [464, 690, 14, 6.300], [350, 706, 9, 6], [320, 664, 9, 5.500], [390, 690, 8, 5.500], [467, 612, 9, 5.500], [262, 722, 8, 5.500],
  [535, 690, 9, 5.500], [225, 795, 8, 6.500], [240, 850, 9, 5.500], [192, 795, 9, 6], [345, 752, 9, 5.500], [315, 745, 7, 5.500],
  [430, 738, 6, 5.500], [365, 664, 8, 5.500], [380, 733, 7, 5.500], [660, 515, 6, 5.500], [498, 610, 9, 5.500]];
let seed = 7;
const rnd = () => (seed = (seed * 16807) % 2147483647) / 2147483647;
function level(x, y) {
  let v = rnd() < (x < 400 ? .55 : y < 530 ? .25 : .35) ? 3 : 4;
  const odd = rnd();
  if (odd < .05) v = 5;
  else if (odd > .97) v = 2;
  for (const [hx, hy, r, p] of hot) {
    const d = Math.hypot(x - hx, y - hy) / r;
    if (d < 1.100) v = Math.max(v, Math.round(p - d * (p - 4.600) + (rnd() - .5) * 1.200));
  }
  return Math.min(v, 8);
}
function mesh(x0, y0, x1, y1, s, fill) {
  const cols = Math.ceil((x1 - x0) / s), rows = Math.ceil((y1 - y0) / s), p = [];
  for (let j = 0; j <= rows; j++) {
    p.push([]);
    for (let i = 0; i <= cols; i++) p[j].push([Math.round(x0 + (i + (j % 2) * .5 + (rnd() - .5) * .8) * s), Math.round(y0 + (j + (rnd() - .5) * .8) * s)]);
  }
  let out = '';
  for (let j = 0; j < rows; j++) for (let i = 0; i < cols; i++) {
    const a = p[j][i], b = p[j][i + 1], c = p[j + 1][i + 1], d = p[j + 1][i];
    out += `<path d="M${a}L${b} ${c} ${d}Z" fill="${fill(a[0], a[1])}"/>`;
  }
  return out;
}
document.getElementById('map').innerHTML = `
  <clipPath id="land"><path d="${honshu}${isles}"/></clipPath>
  <clipPath id="north"><path d="${grey.join('')}"/></clipPath>
  <g clip-path="url(#land)" stroke="#6b5148" stroke-opacity=".6" stroke-width="1.200">${mesh(150, 400, 700, 890, 9, (x, y) => palette[level(x, y)])}</g>
  <path d="${honshu}${isles}" fill="none" stroke="#806a60" stroke-width="1.500"/>
  <g clip-path="url(#north)" stroke="#929292" stroke-width="1.200">${mesh(565, 120, 980, 600, 11, () => '#c6c6c6')}</g>
  <path d="${grey.join('')}" fill="none" stroke="#999" stroke-width="1.500"/>
  <path d="M446 672 452 678 449 688 444 680ZM275 752 284 754 288 748ZM218 815 224 812 222 822Z" fill="#fff"/>
  <path d="${okinawa}" fill="#7a3d5c" stroke="#555"/>
  <path d="M172 842V907" stroke="#999" stroke-width="3"/>`;
```
